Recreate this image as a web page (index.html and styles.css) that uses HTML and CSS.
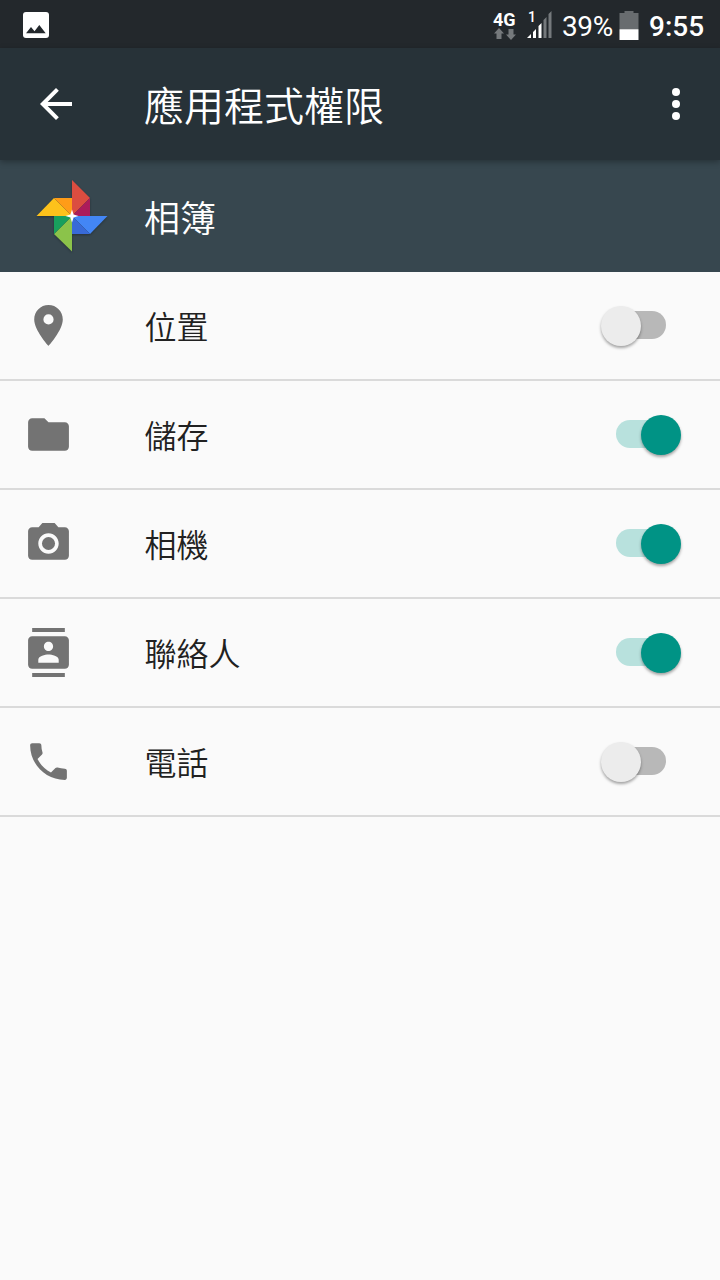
FILE: index.html
```html
<!DOCTYPE html>
<html lang="zh-Hant">
<head>
<meta charset="utf-8">
<title>應用程式權限</title>
<link rel="stylesheet" href="styles.css">
</head>
<body>
<div class="status">
  <svg class="status-photo" width="26" height="26" viewBox="0 0 26 26"><rect width="26" height="26" rx="3" fill="#fff"/><path d="M3 21.300 8 15l3.500 4.300L16.300 13 22.700 21.300Z" fill="#23282c"/></svg>
  <div class="status-right">
    <div class="network">
      <span class="network-label">4G</span>
      <svg class="network-arrows" width="22" height="12" viewBox="0 0 22 12" fill="#75797c"><path d="M5 0 10 5.500H7.500V11h-5V5.500H0ZM17 12l-5-5.500h2.500V1h5v5.500H22Z"/></svg>
    </div>
    <div class="signal">
      <span class="sim">1</span>
      <svg class="bars" width="25" height="27" viewBox="0 0 25 27"><path fill="#fff" d="M0 27l4-4v4ZM6 27v-6l3-3v9ZM11.500 27V15l3-3v15Z"/><path fill="#75797c" d="M16.500 27V9l3-3v21ZM21.500 27V3l3-3v27Z"/></svg>
    </div>
    <span class="percent">39%</span>
    <svg class="battery" width="20" height="29" viewBox="0 0 20 29"><path fill="#686c6f" d="M5.500 0h9v2H19.500v16H.5V2h5Z"/><path fill="#fff" d="M.5 18.200h19V29H.5Z"/></svg>
    <span class="clock">9:55</span>
  </div>
</div>
<header class="toolbar">
  <svg class="back" width="48" height="48" viewBox="0 0 24 24" fill="#fff"><path d="M20 11H7.830l5.590-5.590L12 4l-8 8 8 8 1.410-1.410L7.830 13H20v-2z"/></svg>
  <h1 class="title">應用程式權限</h1>
  <svg class="more" width="48" height="48" viewBox="0 0 24 24" fill="#fff"><circle cx="12" cy="6" r="2"/><circle cx="12" cy="12" r="2"/><circle cx="12" cy="18" r="2"/></svg>
</header>
<section class="app">
  <svg class="app-logo" width="72" height="72" viewBox="0 0 72 72">
    <path fill="#db4d40" d="M36 0 54 18 36 36Z"/><path fill="#ac1c5b" d="M54 18V36H36Z"/>
    <path fill="#4386f5" d="M36 36H71.500L54 54Z"/><path fill="#386ad7" d="M36 36 54 54H36Z"/>
    <path fill="#8bc34a" d="M36 36V71.500L18 54Z"/><path fill="#189f5d" d="M18 36H36L18 54Z"/>
    <path fill="#fdc21b" d="M.5 36 18 18 36 36Z"/><path fill="#ff9c18" d="M18 18H36V36Z"/>
    <path fill="#fff" d="M36 29.500 37.600 34.400 42.500 36 37.600 37.600 36 42.500 34.400 37.600 29.500 36 34.400 34.400Z"/>
  </svg>
  <h2 class="app-name">相簿</h2>
</section>
<main class="list">
  <div class="row">
    <svg class="icon" viewBox="0 0 24 24"><path d="M12 2C8.130 2 5 5.130 5 9c0 5.250 7 13 7 13s7-7.750 7-13c0-3.870-3.130-7-7-7zm0 9.500a2.500 2.500 0 0 1 0-5 2.500 2.500 0 0 1 0 5z"/></svg>
    <span class="label">位置</span>
    <div class="switch"><i class="track"></i><i class="thumb"></i></div>
  </div>
  <div class="row">
    <svg class="icon" viewBox="0 0 24 24"><path d="M10 4H4c-1.100 0-1.990.9-1.990 2L2 18c0 1.100.9 2 2 2h16c1.100 0 2-.9 2-2V8c0-1.100-.9-2-2-2h-8l-2-2z"/></svg>
    <span class="label">儲存</span>
    <div class="switch on"><i class="track"></i><i class="thumb"></i></div>
  </div>
  <div class="row">
    <svg class="icon" viewBox="0 0 24 24"><circle cx="12" cy="12" r="3.200"/><path d="M9 2 7.170 4H4c-1.100 0-2 .9-2 2v12c0 1.100.9 2 2 2h16c1.100 0 2-.9 2-2V6c0-1.100-.9-2-2-2h-3.170L15 2H9zm3 15c-2.760 0-5-2.240-5-5s2.240-5 5-5 5 2.240 5 5-2.240 5-5 5z"/></svg>
    <span class="label">相機</span>
    <div class="switch on"><i class="track"></i><i class="thumb"></i></div>
  </div>
  <div class="row">
    <svg class="icon" viewBox="0 0 24 24"><path d="M20 0H4v2h16V0zM4 24h16v-2H4v2zM20 4H4c-1.100 0-2 .9-2 2v12c0 1.100.9 2 2 2h16c1.100 0 2-.9 2-2V6c0-1.100-.9-2-2-2zm-8 2.750c1.240 0 2.250 1.010 2.250 2.250s-1.010 2.250-2.250 2.250S9.750 10.240 9.750 9 10.760 6.750 12 6.750zM17 17H7v-1.500c0-1.670 3.330-2.500 5-2.500s5 .83 5 2.500V17z"/></svg>
    <span class="label">聯絡人</span>
    <div class="switch on"><i class="track"></i><i class="thumb"></i></div>
  </div>
  <div class="row">
    <svg class="icon" viewBox="0 0 24 24"><path d="M6.620 10.790c1.440 2.830 3.760 5.140 6.590 6.590l2.200-2.200c.27-.27.670-.36 1.020-.24 1.120.37 2.330.57 3.570.57.550 0 1 .45 1 1V20c0 .55-.45 1-1 1-9.390 0-17-7.610-17-17 0-.55.450-1 1-1h3.500c.55 0 1 .45 1 1 0 1.250.2 2.450.57 3.570.11.350.03.740-.25 1.020l-2.200 2.200z"/></svg>
    <span class="label">電話</span>
    <div class="switch"><i class="track"></i><i class="thumb"></i></div>
  </div>
</main>
</body>
</html>
```
FILE: styles.css
```css
* { box-sizing: border-box; }
body {
  margin: 0;
  min-height: 1280px;
  background: #fafafa;
  color: #212121;
  font-family: Roboto, "Noto Sans CJK TC", sans-serif;
}
svg { display: block; flex: none; }
.status {
  display: flex;
  justify-content: space-between;
  height: 48px;
  padding: 0 15px 0 23px;
  background: #23282c;
  color: #fff;
}
.status-photo { margin-top: 12px; }
.status-right { display: flex; }
.network { width: 24px; margin-right: 10px; padding-top: 12px; }
.network-label {
  display: block;
  font-size: 18px;
  font-weight: 700;
  line-height: 15px;
}
.network-arrows { margin: 1px 0 0 1px; }
.signal { position: relative; width: 25px; margin-right: 10px; padding-top: 11px; }
.sim {
  position: absolute;
  left: 1px;
  top: 11px;
  font-size: 14px;
  font-weight: 500;
  line-height: 12px;
}
.percent {
  width: 57px;
  font-size: 28px;
  letter-spacing: -.4px;
  line-height: 53px;
  white-space: nowrap;
}
.battery { margin-top: 11px; }
.clock {
  width: 56px;
  margin-left: 10px;
  font-size: 28px;
  font-weight: 500;
  line-height: 53px;
  white-space: nowrap;
}
.toolbar {
  position: relative;
  display: flex;
  align-items: center;
  height: 112px;
  padding: 0 20px 0 32px;
  background: #273238;
  box-shadow: 0 2px 6px rgba(0, 0, 0, .3);
  color: #fff;
}
.title, .app-name, .label { font-weight: 350; }
.title {
  flex: 1;
  margin: 0 0 0 64px;
  padding-top: 7px;
  font-size: 40px;
  line-height: 56px;
}
.app {
  display: flex;
  align-items: center;
  height: 112px;
  padding-left: 36px;
  background: #37474f;
  color: #fff;
}
.app-logo { filter: drop-shadow(0 1px 1px rgba(0, 0, 0, .3)); }
.app-name { margin: 0 0 0 36px; padding-top: 7px; font-size: 36px; line-height: 50px; }
.row {
  display: flex;
  align-items: center;
  height: 109px;
  padding: 0 38px 0 24px;
  border-bottom: 2px solid #dadada;
}
.icon { width: 49px; height: 49px; fill: #737373; }
.label { flex: 1; margin-left: 71.5px; padding-top: 5px; font-size: 32px; line-height: 46px; }
.switch { position: relative; width: 82px; height: 43px; }
.track {
  position: absolute;
  left: 16px;
  top: 7px;
  width: 50px;
  height: 28px;
  border-radius: 14px;
  background: #b8b8b8;
}
.thumb {
  position: absolute;
  left: 1px;
  top: 1.5px;
  width: 40px;
  height: 40px;
  border-radius: 50%;
  background: #ececec;
  box-shadow: 0 2px 3px rgba(0, 0, 0, .35);
}
.on .track { background: #b8e1dd; }
.on .thumb { left: 41px; background: #009385; }
```
